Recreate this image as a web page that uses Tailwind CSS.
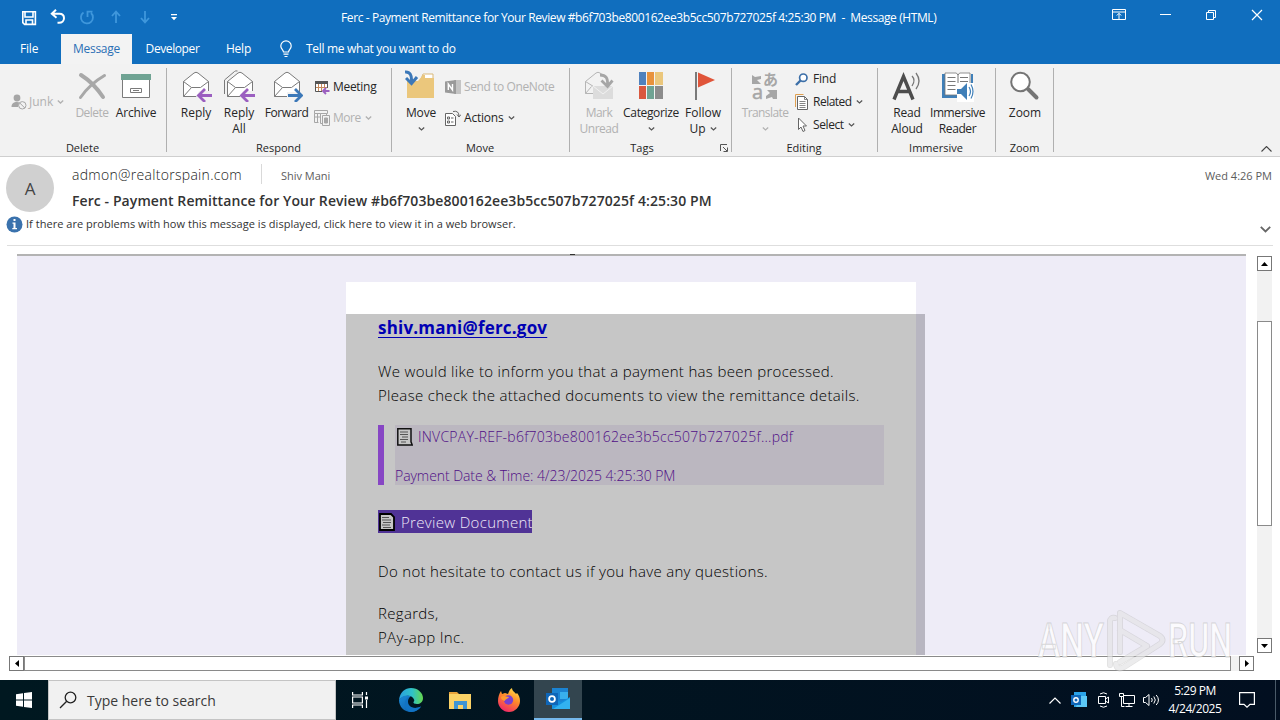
<!DOCTYPE html>
<html lang="en">
    <head>
        <meta charset="UTF-8">
        <meta name="viewport" content="width=device-width, initial-scale=1.0">
        <title>Message (HTML)</title>
        <script src="https://cdn.jsdelivr.net/npm/@tailwindcss/browser@4"></script>
    </head>
    <body class="w-[1280px] h-[720px] overflow-hidden bg-white font-['Open_Sans','Noto_Sans',sans-serif] text-xs text-[#262626] whitespace-nowrap flex flex-col">

        <!-- TITLE BAR -->
        <header class="h-16 bg-[#106ebe] text-white shrink-0">
            <div class="relative flex items-center h-[34px]">
                <!-- Quick access -->
                <div class="flex items-center pl-5 pt-px">
                    <svg class="w-[18px] h-[18px]" viewBox="0 0 18 18" fill="none" stroke="#fff" stroke-width="1.6"><path d="M2.8 2.8h12.6v12.6H4.6L2.8 13.600z"/><path d="M5 3v5h8V3M6 15v-4h6.500v4"/></svg>
                    <svg class="w-[18px] h-[18px] ml-[11px]" viewBox="0 0 18 18" fill="none" stroke="#fff" stroke-width="2"><path d="M7 .8 2.800 4.800l4.700 4M3 4.800h7.500c3 0 4.500 2 4.500 4.500s-2 4.500-5 4.500H8.500"/></svg>
                    <svg class="w-[18px] h-[18px] ml-[11px]" viewBox="0 0 18 18" fill="none" stroke="#3f97dc" stroke-width="1.800"><path d="M5.500 3.500a6 6 0 1 0 7.500.5M9.500 8V2.700h5"/></svg>
                    <svg class="w-[18px] h-[18px] ml-[11px]" viewBox="0 0 18 18" fill="none" stroke="#3f97dc" stroke-width="1.800"><path d="M9 14V3M5 7l4-4.500L13 7"/></svg>
                    <svg class="w-[18px] h-[18px] ml-[11px]" viewBox="0 0 18 18" fill="none" stroke="#3f97dc" stroke-width="1.800"><path d="M9 2v11M5 9l4 4.500L13 9"/></svg>
                    <svg class="w-[18px] h-[18px] ml-[11px]" viewBox="0 0 18 18" fill="#fff"><path d="M6 5h6v1.200H6zM6 8h6l-3 3.200z"/></svg>
                </div>
                <div class="absolute left-[341px] top-[9px] leading-[18px] tracking-[-0.4px] whitespace-pre">Ferc - Payment Remittance for Your Review #b6f703be800162ee3b5cc507b727025f 4:25:30 PM  -  Message (HTML)</div>
                <!-- Window buttons -->
                <div class="ml-auto flex items-center pb-1 pr-4">
                    <svg class="w-[14px] h-[12px]" viewBox="0 0 14 12" fill="none" stroke="#fff"><path d="M.5.5h13v10H.5zM.5 3h13M7 10V4.500M4.800 6.500 7 4.300l2.200 2.200"/></svg>
                    <svg class="w-[11px] h-[12px] ml-[34px]" viewBox="0 0 11 12" stroke="#fff"><path d="M0 5.500h11"/></svg>
                    <svg class="w-[11px] h-[12px] ml-[35px]" viewBox="0 0 11 12" fill="none" stroke="#fff"><path d="M.5 3.500h7v7h-7zM2.500 3V1.500h7v7H8"/></svg>
                    <svg class="w-[12px] h-[12px] ml-[34px] mr-px" viewBox="0 0 12 12" stroke="#fff" stroke-width="1.200"><path d="m1 1 10 10M11 1 1 11"/></svg>
                </div>
            </div>
            <!-- Tabs -->
            <div class="flex h-[30px] leading-[30px]">
                <div class="w-[61px] pl-5 tracking-[-0.2px]">File</div>
                <div class="w-[71px] text-center bg-[#f3f3f3] text-[#2b6fb5] tracking-[-0.3px]">Message</div>
                <div class="w-[81px] text-center tracking-[-0.4px]">Developer</div>
                <div class="w-[51px] text-center tracking-[-0.2px]">Help</div>
                <svg class="w-4 h-[18px] ml-[14px] mt-1.5" viewBox="0 0 16 18" fill="none" stroke="#fff" stroke-width="1.200"><path d="M5.500 12c0-2-2.700-3-2.700-6a5.200 5.200 0 0 1 10.400 0c0 3-2.700 4-2.700 6zM5.500 14.200h5M6.500 16.500h3"/></svg>
                <div class="ml-3 tracking-[-0.3px]">Tell me what you want to do</div>
            </div>
        </header>

        <!-- RIBBON -->
        <section class="flex h-[93px] shrink-0 bg-[#f2f2f2] border-b border-[#cfcfcf] leading-4 text-center relative">

            <!-- Delete -->
            <div class="w-[167px] relative flex flex-col">
                <div class="flex h-[76px] pt-1.5 pl-[11px]">
                    <div class="w-[59px] flex items-center h-[63px] text-[#b1b1b1]">
                        <svg class="w-4 h-4" viewBox="0 0 16 16"><circle cx="6" cy="4" r="3.400" fill="#a6a6a6"/><path d="M.5 13c0-3.500 2-5 5.500-5 1 0 2 .2 2.500.5L7 13z" fill="#a6a6a6"/><circle cx="11.300" cy="11.300" r="3.700" fill="#f2f2f2" stroke="#a6a6a6"/><path d="m8.800 9 5 5" stroke="#a6a6a6"/></svg>
                        <span class="ml-0.5">Junk</span>
                        <svg class="w-[7px] h-1 ml-1" viewBox="0 0 7 4" fill="none" stroke="#b1b1b1" stroke-width="1.300"><path d="m.8.5 2.700 2.500L6.200.5"/></svg>
                    </div>
                    <div class="w-11 flex flex-col items-center text-[#b1b1b1]">
                        <svg class="w-8 h-8 mb-[3px]" viewBox="0 0 32 32" fill="none" stroke="#a8a8a8" stroke-linecap="round"><path d="M5 5c8 5 16 13 22 22" stroke-width="4"/><path d="M28.500 5.500C19 11 11 18 4.500 27.500" stroke-width="3"/></svg>
                        <span class="tracking-[-0.5px]">Delete</span>
                    </div>
                    <div class="w-11 flex flex-col items-center">
                        <svg class="w-8 h-8 mb-[3px]" viewBox="0 0 32 32"><path d="M2.500 9.500h27v18h-27z" fill="#fff" stroke="#7a7a7a"/><path d="M1 4h30v6H1z" fill="#6fa393"/><path d="M10.500 18.500h11v4h-11z" fill="#fff" stroke="#7a7a7a"/><path d="M13 20.500h6" stroke="#7a7a7a"/></svg>
                        <span class="tracking-[-0.1px]">Archive</span>
                    </div>
                </div>
                <div class="text-[11px] pr-0.5">Delete</div>
                <div class="absolute right-0 top-1 w-px h-[84px] bg-[#b0b0b0]"></div>
            </div>

            <!-- Respond -->
            <div class="w-[225px] relative flex flex-col">
                <div class="flex h-[76px] pt-1.5 pl-[7px]">
                    <div class="w-11 flex flex-col items-center">
                        <svg class="w-8 h-8 mb-[3px]" viewBox="0 0 32 32" fill="none"><path d="M3.500 11.500 14 3q2-1.500 4 0l10.500 8.500V26.500h-25z" fill="#fff" stroke="#7a7a7a"/><path d="m3.500 11.500 8 6h9l8-6M3.500 26.500l8-9" stroke="#7a7a7a"/><path d="M19 21h13v12H16v-6z" fill="#f2f2f2"/><path d="M32 25.500H19M25 19l-6.500 6.500L25 32" stroke="#9b5fc0" stroke-width="2.800"/></svg>
                        <span>Reply</span>
                    </div>
                    <div class="w-[42px] flex flex-col items-center">
                        <svg class="w-8 h-8 mb-[3px]" viewBox="0 0 32 32" fill="none"><path d="M1.500 24V10L11.500 1.500q1-1 3-.5" stroke="#7a7a7a"/><path d="M4.500 11.500 15 3q2-1.500 4 0l10.500 8.500V26.500h-25z" fill="#fff" stroke="#7a7a7a"/><path d="m4.500 11.500 8 6h9l8-6M4.500 26.500l8-9" stroke="#7a7a7a"/><path d="M20 21h12v12H17v-6z" fill="#f2f2f2"/><path d="M32 25.500H19M25 19l-6.500 6.500L25 32" stroke="#9b5fc0" stroke-width="2.800"/></svg>
                        <span>Reply<br>All</span>
                    </div>
                    <div class="w-[53px] flex flex-col items-center">
                        <svg class="w-8 h-8 mb-[3px]" viewBox="0 0 32 32" fill="none"><path d="M3.500 11.500 14 3q2-1.500 4 0l10.500 8.500V26.500h-25z" fill="#fff" stroke="#7a7a7a"/><path d="m3.500 11.500 8 6h9l8-6M3.500 26.500l8-9" stroke="#7a7a7a"/><path d="M16 22h16v11H16z" fill="#f2f2f2"/><path d="M17 25.500h13M24 19l6.500 6.500L24 32" stroke="#3c78b8" stroke-width="2.800"/></svg>
                        <span class="tracking-[-0.4px]">Forward</span>
                    </div>
                    <div class="flex flex-col pl-px pt-[9px] gap-[15px]">
                        <div class="flex items-center h-4">
                            <svg class="w-4 h-4" viewBox="0 0 16 16" fill="none"><path d="M1.500 2.500h12v10h-12z" fill="#fff" stroke="#555"/><path d="M1 2h13v3H1z" fill="#555"/><path d="M4.500 5v7M7.500 5v7M10.500 5v7M2 8.500h11" stroke="#c88a5c"/><path d="M8 9h8v7H8z" fill="#f2f2f2"/><path d="M15.500 12H9M12 9l-3 3 3 3" stroke="#9b5fc0" stroke-width="1.800"/></svg>
                            <span class="ml-[3px] tracking-[-0.3px]">Meeting</span>
                        </div>
                        <div class="flex items-center h-4 text-[#b1b1b1]">
                            <svg class="w-4 h-4" viewBox="0 0 16 16" fill="none" stroke="#a6a6a6"><path d="M.5.500h13v3H.5zM.5 3.500v9h4M3.500 4v8M1 7h5"/><path d="M6.500 3.500h6v10h-6z" fill="#f2f2f2"/><path d="M8.500 5.500h7v10h-7z" fill="#f2f2f2"/><path d="M10.500 8v5h3V8z" fill="#a6a6a6"/></svg>
                            <span class="ml-[3px] tracking-[-0.5px]">More</span>
                            <svg class="w-[7px] h-1 ml-1" viewBox="0 0 7 4" fill="none" stroke="#b1b1b1" stroke-width="1.300"><path d="m.8.5 2.700 2.500L6.200.5"/></svg>
                        </div>
                    </div>
                </div>
                <div class="text-[11px] pr-0.5">Respond</div>
                <div class="absolute right-0 top-1 w-px h-[84px] bg-[#b0b0b0]"></div>
            </div>

            <!-- Move -->
            <div class="w-[178px] relative flex flex-col">
                <div class="flex h-[76px] pt-1.5 pl-2">
                    <div class="w-[42px] flex flex-col items-center">
                        <svg class="w-8 h-8 mb-[3px]" viewBox="0 0 32 32" fill="none"><path d="M18 4h10v5H16z" fill="#fff" stroke="#d9b878"/><path d="M2 11h11l5-6h2v3h9v20H2z" fill="#ebc77c"/><path d="M0 2c5-.500 7 3 6.500 10M1 8l5.500 5.500L12 7" stroke="#3c78b8" stroke-width="3"/></svg>
                        <span class="tracking-[-0.2px]">Move</span>
                        <svg class="w-[7px] h-1 mt-[6px]" viewBox="0 0 7 4" fill="none" stroke="#555" stroke-width="1.200"><path d="m.8.5 2.700 2.500L6.200.5"/></svg>
                    </div>
                    <div class="flex flex-col pl-[3px] pt-[9px] gap-[15px]">
                        <div class="flex items-center h-4 text-[#b1b1b1]">
                            <svg class="w-4 h-4" viewBox="0 0 16 16"><path d="M9 1h7v14H9z" fill="#c4c4c4"/><path d="M0 2.500 11 1v14L0 13.500z" fill="#9a9a9a"/><path d="M3.300 11V5l4.200 6V5" fill="none" stroke="#fff" stroke-width="1.400"/></svg>
                            <span class="ml-[3px] tracking-[-0.4px]">Send to OneNote</span>
                        </div>
                        <div class="flex items-center h-4">
                            <svg class="w-4 h-4" viewBox="0 0 16 16" fill="none" stroke="#666"><path d="M.5 3.500h7l3 3v9H.5z" fill="#fff"/><path d="M2.500 9h2v-2h-2zM2.500 13h2v-2h-2zM6 8h2.500M6 12h2.500M8 1.500q6-1.500 6 5M12 4.500l2 2.500 2-2.500"/></svg>
                            <span class="ml-[3px] tracking-[-0.2px]">Actions</span>
                            <svg class="w-[7px] h-1 ml-1" viewBox="0 0 7 4" fill="none" stroke="#555" stroke-width="1.200"><path d="m.8.5 2.700 2.500L6.200.5"/></svg>
                        </div>
                    </div>
                </div>
                <div class="text-[11px] pr-0.5">Move</div>
                <div class="absolute right-0 top-1 w-px h-[84px] bg-[#b0b0b0]"></div>
            </div>

            <!-- Tags -->
            <div class="w-[162px] relative flex flex-col">
                <div class="flex h-[76px] pt-1.5 pl-[7px]">
                    <div class="w-11 flex flex-col items-center text-[#b1b1b1]">
                        <svg class="w-8 h-8 mb-[3px]" viewBox="0 0 32 32" fill="none" stroke="#b5b5b5"><path d="M11 23.500H2.500V11.500L13 3q2-1.500 4 0l7 5M2.500 11.500l8 5M2.500 23.500l6-7"/><path d="M10 16h20v13H10z" fill="#dcdcdc" stroke="none"/><path d="m10 16 10 8 10-8" stroke="#f2f2f2"/><path d="M17 5c6 0 8 3 7.500 10M18.500 10.500l6 6 5-6" stroke="#a6a6a6" stroke-width="2.800"/></svg>
                        <span class="tracking-[-0.5px]">Mark<br>Unread</span>
                    </div>
                    <div class="w-[60px] flex flex-col items-center">
                        <svg class="w-8 h-8 mb-[3px]" viewBox="0 0 32 32"><path d="M4 2h7v13H4z" fill="#4f81bd"/><path d="M12 2h7v13h-7z" fill="#e8923c"/><path d="M20 2h8v13h-8z" fill="#ebc77c"/><path d="M4 16h7v13H4z" fill="#d9583f"/><path d="M12 16h7v13h-7z" fill="#6fa393"/><path d="M20 16h8v13h-8z" fill="#8c8c8c"/></svg>
                        <span class="tracking-[-0.35px]">Categorize</span>
                        <svg class="w-[7px] h-1 mt-[6px]" viewBox="0 0 7 4" fill="none" stroke="#555" stroke-width="1.200"><path d="m.8.5 2.700 2.500L6.200.5"/></svg>
                    </div>
                    <div class="w-11 flex flex-col items-center">
                        <svg class="w-8 h-8 mb-[3px]" viewBox="0 0 32 32"><path d="M8 2h2v28H8z" fill="#7a7a7a"/><path d="M11 2.500 28 10l-17 7.500z" fill="#e0553a"/></svg>
                        <span>Follow</span>
                        <span class="flex items-center">Up<svg class="w-[7px] h-1 ml-1" viewBox="0 0 7 4" fill="none" stroke="#555" stroke-width="1.200"><path d="m.8.5 2.700 2.500L6.200.5"/></svg></span>
                    </div>
                </div>
                <div class="text-[11px] pr-[18px]">Tags</div>
                <svg class="absolute right-1 bottom-1 w-2 h-2" viewBox="0 0 8 8" fill="none" stroke="#555"><path d="M.5 7V.500H7M3 3l4 4M7.500 3.500v4h-4"/></svg>
                <div class="absolute right-0 top-1 w-px h-[84px] bg-[#b0b0b0]"></div>
            </div>

            <!-- Editing -->
            <div class="w-[146px] relative flex flex-col">
                <div class="flex h-[76px] pt-1.5 pl-[7px]">
                    <div class="w-[52px] flex flex-col items-center text-[#b1b1b1]">
                        <svg class="w-8 h-8 mb-[3px] overflow-visible" viewBox="0 0 32 32" fill="#a6a6a6"><path d="M3 5l3 2 6-1v3l-4 1 4 4H3zM28 29v-9H18l3 3-4 3v3l6-2 1 2z"/><text x="14" y="15" font-size="15" font-weight="700" font-family="Noto Sans CJK JP, sans-serif">あ</text><text x="3" y="29" font-size="20" font-family="Open Sans, sans-serif" stroke="#a6a6a6" stroke-width=".5">a</text></svg>
                        <span class="tracking-[-0.6px]">Translate</span>
                        <svg class="w-[7px] h-1 mt-[6px]" viewBox="0 0 7 4" fill="none" stroke="#b1b1b1" stroke-width="1.200"><path d="m.8.5 2.700 2.500L6.200.5"/></svg>
                    </div>
                    <div class="flex flex-col pl-1 pt-px gap-[7px]">
                        <div class="flex items-center h-4">
                            <svg class="w-[13px] h-[13px]" viewBox="0 0 13 13" fill="none" stroke="#3c6fa8"><circle cx="8.300" cy="4.700" r="3.700" fill="#fff" stroke-width="1.700"/><path d="M5.500 7.500 1 12" stroke-width="2.400"/></svg>
                            <span class="ml-[5px] tracking-[-0.2px]">Find</span>
                        </div>
                        <div class="flex items-center h-4">
                            <svg class="w-[14px] h-4" viewBox="0 0 14 16" fill="none" stroke="#666"><path d="M.5 13V.500h8" stroke="#e0a050"/><path d="M2.500 2.500h7l3 3v10h-10z" fill="#fff"/><path d="M9.500 2.500v3h3M4.500 7.500h6M4.500 9.500h6M4.500 11.500h6M4.500 13.500h6" stroke-width=".8"/></svg>
                            <span class="ml-1 tracking-[-0.5px]">Related</span>
                            <svg class="w-[7px] h-1 ml-1" viewBox="0 0 7 4" fill="none" stroke="#555" stroke-width="1.200"><path d="m.8.5 2.700 2.500L6.200.5"/></svg>
                        </div>
                        <div class="flex items-center h-4">
                            <svg class="w-[14px] h-4" viewBox="0 0 14 16" fill="#fff" stroke="#666"><path d="M3.500 1v11.500L6 10l2 4.500 2-1-2-4.500h3.500z"/></svg>
                            <span class="ml-1 tracking-[-0.4px]">Select</span>
                            <svg class="w-[7px] h-1 ml-1" viewBox="0 0 7 4" fill="none" stroke="#555" stroke-width="1.200"><path d="m.8.5 2.700 2.500L6.200.5"/></svg>
                        </div>
                    </div>
                </div>
                <div class="text-[11px] pr-0.5">Editing</div>
                <div class="absolute right-0 top-1 w-px h-[84px] bg-[#b0b0b0]"></div>
            </div>

            <!-- Immersive -->
            <div class="w-[118px] relative flex flex-col">
                <div class="flex h-[76px] pt-1.5 pl-[7px]">
                    <div class="w-11 flex flex-col items-center">
                        <svg class="w-8 h-8 mb-[3px] overflow-visible" viewBox="0 0 32 32" fill="none"><path d="M3 29.500 12.500 6.500 22 29.500M7 21.500h11" stroke="#4d4d4d" stroke-width="3.400"/><path d="M21 6q4 4 0 10M25 3q6 8 0 16" stroke="#777" stroke-width="1.300"/></svg>
                        <span class="tracking-[-0.2px]">Read<br>Aloud</span>
                    </div>
                    <div class="w-[57px] flex flex-col items-center">
                        <svg class="w-8 h-8 mb-[3px]" viewBox="0 0 32 32" fill="none"><path d="M0 4h3v20h26V4h2v24H0z" fill="#3f7fb8"/><path d="M3 3h11q2 1 2 2 0-1 2-2h10v22H3z" fill="#fff" stroke="#777" stroke-width=".8"/><path d="M16 4v21M5.500 7.500h8M5.500 11.500h8M5.500 15.500h8M5.500 19.500h8M18 7.500h8M18 11.500h8" stroke="#777"/><path d="M15 13h17v19H15z" fill="#fff"/><path d="M15 19h4l6-6v17l-6-6h-4z" fill="#3f7fb8"/><path d="M27 17q3 4.500 0 9M29 14.500q4 7 0 14" stroke="#3f7fb8" stroke-width="1.200"/></svg>
                        <span class="tracking-[-0.4px]">Immersive<br>Reader</span>
                    </div>
                </div>
                <div class="text-[11px] pr-0.5">Immersive</div>
                <div class="absolute right-0 top-1 w-px h-[84px] bg-[#b0b0b0]"></div>
            </div>

            <!-- Zoom -->
            <div class="w-[58px] relative flex flex-col">
                <div class="flex flex-col items-center h-[76px] pt-1.5">
                    <svg class="w-8 h-8 mb-[3px] mr-0.5" viewBox="0 0 32 32" fill="none" stroke="#757575"><path d="m20 19 8.500 8.500" stroke-width="4" stroke-linecap="round"/><circle cx="12.500" cy="12" r="9.300" fill="#fff" stroke-width="2"/></svg>
                    <span>Zoom</span>
                </div>
                <div class="text-[11px] pr-px">Zoom</div>
                <div class="absolute right-0 top-1 w-px h-[84px] bg-[#b0b0b0]"></div>
            </div>

            <svg class="w-[11px] h-[6px] ml-auto mr-2 mt-[82px]" viewBox="0 0 11 6" fill="none" stroke="#444" stroke-width="1.100"><path d="m.5 5.500 5-5 5 5"/></svg>
        </section>

        <!-- MESSAGE HEADER -->
        <section class="h-[88px] shrink-0 flex relative">
            <div class="flex flex-col pl-1.5 w-[66px]">
                <div class="w-12 h-12 mt-[7px] rounded-full bg-[#d0d0d0] text-[#444] text-[17px] leading-[49px] text-center">A</div>
            </div>
            <div class="flex-1 pl-1.5">
                <div class="flex items-center h-[34px] text-[#5c5c5c]">
                    <span class="text-sm pt-0.5 font-light text-[#222] tracking-[0.3px]">admon@realtorspain.com</span>
                    <span class="w-px h-5 bg-[#d9d9d9] ml-[19px]"></span>
                    <span class="text-[11px] ml-[19px] pt-1">Shiv Mani</span>
                    <span class="text-[11px] ml-auto mr-2 pt-1">Wed 4:26 PM</span>
                </div>
                <div class="text-sm leading-5 font-semibold text-[#333] tracking-[0.09px]">Ferc - Payment Remittance for Your Review #b6f703be800162ee3b5cc507b727025f 4:25:30 PM</div>
            </div>
            <div class="absolute left-1.5 top-[59px] flex items-center text-[11px] h-4 text-[#333] tracking-[0.03px]">
                <svg class="w-[17px] h-[17px] mr-[3px]" viewBox="0 0 17 17"><circle cx="8.500" cy="8.500" r="8" fill="#3a72ad"/><path d="M7.500 3h2v2h-2zM6.500 6.500h3V12H11v1.200H6.300V12h1.200V7.700h-1z" fill="#fff"/></svg>
                If there are problems with how this message is displayed, click here to view it in a web browser.
            </div>
            <svg class="absolute right-[9px] top-[69px] w-[11px] h-[7px]" viewBox="0 0 11 7" fill="none" stroke="#666" stroke-width="1.800"><path d="m.8.8 4.700 4.700L10.200.8"/></svg>
        </section>
        <div class="h-px ml-[7px] mr-[7px] bg-[#dedede] shrink-0"></div>

        <!-- MESSAGE BODY -->
        <main class="h-[434px] shrink-0 relative pt-2">
            <div class="flex h-[401px]">
                <div class="ml-[17px] w-[1229px] bg-[#eeecf7] border-t-2 border-[#b3b3b3] pl-[329px] pt-[26px] overflow-hidden">
                    <div class="w-[570px] h-8 bg-white"></div>
                    <div class="w-[579px] h-[341px] bg-[#c6c6c6] border-r-9 border-[#b8b6c1] pl-8 text-[15px] leading-6 font-light text-black tracking-[0.32px]">
                        <div class="pt-0.5 text-[17px] font-bold text-[#0000b4] underline underline-offset-3 decoration-1 decoration-[#0000b4] tracking-[0.2px]">shiv.mani@ferc.gov</div>
                        <div class="mt-[19px]">We would like to inform you that a payment has been processed.<br>Please check the attached documents to view the remittance details.</div>
                        <div class="mt-[18px] flex w-[506px] h-[60px] border-l-6 border-[#8746c4] pl-[11px]">
                            <div class="flex-1 bg-[#bbb7c0] text-[#500f86] text-sm">
                                <div class="flex items-center h-6 tracking-[0.24px]">
                                    <svg class="w-4 h-[18px] ml-0.5 mr-[5px]" viewBox="0 0 16 18" fill="none" stroke="#111"><path d="M.8.8h13.200v13l1.200 3.200H.8z" fill="#c6c6c6" stroke-width="1.500"/><path d="M3 4h8M3 6.500h8M5 9h6M3 11.500h8M4 14h5" stroke="#555"/></svg>
                                    INVCPAY-REF-b6f703be800162ee3b5cc507b727025f...pdf
                                </div>
                                <div class="mt-[17px] leading-5 tracking-[-0.06px]">Payment Date &amp; Time: 4/23/2025 4:25:30 PM</div>
                            </div>
                        </div>
                        <div class="mt-[25px] w-[154px] h-[23px] overflow-hidden bg-[#503396] text-[#efe9f8] flex items-center">
                            <svg class="w-4 h-[18px] ml-px mr-[6px] shrink-0" viewBox="0 0 16 18" fill="none" stroke="#000"><path d="M1 1h11l3 3v13H1z" fill="#c6c6c6" stroke-width="1.800"/><path d="M3 4.500h7M3 7h9M4 9.500h8M3 12h8M4 14.500h8" stroke="#555"/></svg>
                            Preview Document
                        </div>
                        <div class="mt-[26px]">Do not hesitate to contact us if you have any questions.</div>
                        <div class="mt-[18px]">Regards,<br>PAy-app Inc.</div>
                    </div>
                </div>
                <!-- Vertical scrollbar -->
                <div class="ml-[11px] mt-0.5 w-[15px] h-[397px] bg-[#f2f2f2] flex flex-col">
                    <div class="h-[15px] border border-[#777] bg-white flex items-center justify-center"><svg class="w-[7px] h-1" viewBox="0 0 7 4"><path d="M0 4h7L3.500 0z"/></svg></div>
                    <div class="h-[205px] mt-[50px] border border-[#8a8a8a] bg-white"></div>
                    <div class="h-[15px] mt-auto border border-[#777] bg-white flex items-center justify-center"><svg class="w-[7px] h-1" viewBox="0 0 7 4"><path d="M0 0h7L3.500 4z"/></svg></div>
                </div>
            </div>
            <!-- Horizontal scrollbar -->
            <div class="ml-[9px] mt-px w-[1245px] h-[15px] bg-[#f2f2f2] flex">
                <div class="w-[15px] border border-[#777] bg-white flex items-center justify-center"><svg class="w-1 h-[7px]" viewBox="0 0 4 7"><path d="M4 0v7L0 3.500z"/></svg></div>
                <div class="w-[1207px] border border-[#8a8a8a] bg-white"></div>
                <div class="w-[15px] ml-auto border border-[#777] bg-white flex items-center justify-center"><svg class="w-1 h-[7px]" viewBox="0 0 4 7"><path d="M0 0v7l4-3.500z"/></svg></div>
            </div>
            <div class="absolute left-[570px] top-2 w-[5px] h-px bg-[#333]"></div>

            <!-- Watermark -->
            <svg class="absolute left-[1036px] top-[360px] w-[200px] h-[70px] overflow-visible" viewBox="0 0 200 70" fill="#fff" stroke="#b4b4b4" stroke-opacity=".5">
                <g font-family="Roboto, Open Sans, sans-serif" font-size="49" font-weight="500" fill-opacity=".8">
                    <text x="2" y="51" textLength="66" lengthAdjust="spacingAndGlyphs">ANY</text>
                    <text x="132" y="51" textLength="64" lengthAdjust="spacingAndGlyphs">RUN</text>
                </g>
                <g fill="none" stroke-linejoin="round" stroke-linecap="round">
                    <path d="M74 59V16q0-5 5-4M84 46V7l40 23q5 4 0 8L88 61q-7 4-8-3M84 24l27 16-27 16" stroke="#b4b4b4" stroke-opacity=".4" stroke-width="6"/>
                    <path d="M74 59V16q0-5 5-4M84 46V7l40 23q5 4 0 8L88 61q-7 4-8-3M84 24l27 16-27 16" stroke="#f8f8fa" stroke-width="4.500"/>
                </g>
            </svg>
        </main>

        <!-- TASKBAR -->
        <footer class="h-10 shrink-0 bg-[#011520] bg-linear-to-r from-[#001820] to-[#020f20] text-white flex">
            <div class="w-12 flex items-center justify-center"><svg class="w-4 h-4" viewBox="0 0 16 16" fill="#fff"><path d="M0 2.200 7 1.200V7.500H0zM8 1.100 16 0v7.500H8zM0 8.500h7v6.300l-7-1zM8 8.500h8V16l-8-1.100z"/></svg></div>
            <div class="w-72 bg-[#f1f1f1] border border-[#c4c4c4] text-[#3a3a3a] flex items-center text-sm">
                <svg class="w-[18px] h-[18px] ml-2.5 mr-[10px]" viewBox="0 0 18 18" fill="none" stroke="#222" stroke-width="1.300"><circle cx="11.500" cy="6.500" r="5.300"/><path d="M7.700 10.300 1 17"/></svg>
                <span class="pt-0.5">Type here to search</span>
            </div>
            <div class="w-12 flex items-center justify-center"><svg class="w-4 h-4" viewBox="0 0 16 16" fill="none" stroke="#fff" stroke-width="1.200"><path d="M.6 0v3h9.800V0M.6 16v-3h9.800v3M.6 5h9.800v6H.6zM14.500 0v3M14.500 8v8"/><path d="M13 4.500h3v3h-3z" fill="#fff" stroke="none"/></svg></div>
            <div class="w-[54px] flex items-center justify-center">
                <svg class="w-6 h-6" viewBox="0 0 24 24"><defs><linearGradient id="edgeTop" x1="0" x2="1"><stop stop-color="#2a9fe0"/><stop offset=".55" stop-color="#2fc2c8"/><stop offset="1" stop-color="#66d84d"/></linearGradient><linearGradient id="edgeBot" x1="0" y1="0" x2="1" y2="1"><stop stop-color="#1b8ad8"/><stop offset="1" stop-color="#0c59a4"/></linearGradient></defs><path d="M0 12C1 4 6 0 12 0c7 0 12 5 12 10 0 4-3 6-6 6-2.500 0-4-1-3.500-2 1-1 .8-1.800.5-2.500C13.500 7 6 6 0 12z" fill="url(#edgeTop)"/><path d="M0 12c3-5 9-5.500 12-3.500-3 1-4 3-4 5 0 4 3.500 6.500 8 6.500 3 0 4.500-1 6-1.500C20 22 16 24 12 24 5 24 0 18.500 0 12z" fill="url(#edgeBot)"/><path d="M9 9.500c-4 2-5 10 1 14.300 5 .7 9.500-1.300 12-5.300-6 3-13 1-13-5 0-1.500.5-3 1.700-4z" fill="#1173c4"/></svg>
            </div>
            <div class="w-11 flex items-center justify-center"><svg class="w-[22px] h-[19px]" viewBox="0 0 22 19"><path d="M0 1h8l2 2H0z" fill="#e8a33a"/><path d="M0 3h22v15H0z" fill="#fbd266"/><path d="M5 10h13v8H5z" fill="#3f94d2"/><path d="M9 14h5v4H9z" fill="#fbd266"/></svg></div>
            <div class="w-[52px] flex items-center justify-center pl-px">
                <svg class="w-6 h-6" viewBox="0 0 24 24"><defs><linearGradient id="fox" x1=".8" y1="0" x2=".3" y2="1"><stop stop-color="#ffe14a"/><stop offset=".45" stop-color="#ff8a2a"/><stop offset="1" stop-color="#f0256a"/></linearGradient></defs><path d="M1 13C1 9 2 6 4 3l1 3 3-1 3 1c1-3 2-5 4-6 0 3 3 4 4 6l1-1c2 2 3 5 3 8 0 6-5 11-11 11S1 19 1 13z" fill="url(#fox)"/><circle cx="11.500" cy="12" r="4.700" fill="#7a3fd0"/><path d="M4 9c3-2 5 0 8 0-1 2-4 2-4 4-2-1-4-1-4-4z" fill="#ff9a2e"/></svg>
            </div>
            <div class="w-12 bg-[#33454f] border-b-2 border-[#76b9ed] flex items-center justify-center"><svg class="w-6 h-[22px]" viewBox="0 0 24 22"><path d="M6 0h16v14H6z" fill="#1b83d2"/><path d="M14 4h8v7h-8z" fill="#38b0ee"/><path d="M6 10l9 4 9-5v12H6z" fill="#1490df"/><path d="m24 10-17 11h17z" fill="#32b2f0"/><path d="M0 5h12v12H0z" fill="#0f66b8"/><circle cx="6" cy="11" r="2.900" fill="none" stroke="#fff" stroke-width="1.800"/></svg></div>

            <!-- Tray -->
            <div class="ml-auto flex items-center">
                <svg class="w-3 h-[7px]" viewBox="0 0 12 7" fill="none" stroke="#fff" stroke-width="1.200"><path d="m.5 6.500 5.500-5.500 5.500 5.500"/></svg>
                <svg class="w-4 h-4 ml-[10px]" viewBox="0 0 16 16"><path d="M3 0h12v15H3z" fill="#2aa3e8"/><path d="M9 4h7v11H5z" fill="#5cc8f5"/><path d="M0 3h10v10H0z" fill="#0f66b8"/><circle cx="5" cy="8" r="2.200" fill="none" stroke="#fff" stroke-width="1.400"/></svg>
                <svg class="w-3 h-4 ml-[11px]" viewBox="0 0 12 16" fill="none" stroke="#fff"><path d="M.5 4.500h7v7h-7zM7.500 7l3-2v6l-3-2M2 2q3.500-2.500 7 0M2 14q3.500 2.500 7 0"/></svg>
                <svg class="w-4 h-4 ml-[9px]" viewBox="0 0 16 16" fill="none" stroke="#fff"><path d="M4.500 3.500h11v8h-11zM10 11.500v3M6.500 14.500h7M2.500 5v9.500h3"/><path d="M.5 1.500h4v3h-4z" fill="#011520"/></svg>
                <svg class="w-[17px] h-4 ml-2" viewBox="0 0 17 16" fill="none" stroke="#fff"><path d="M.5 5.500h2L6 2.500v11l-3.500-3h-2zM8.500 6q1.500 2 0 4M10.800 4.500q3 3.500 0 7M13.200 3q4.500 5 0 10"/></svg>
                <div class="w-[70px] text-center text-[12px] leading-[18px] tracking-[-0.45px]">5:29 PM<br>4/24/2025</div>
                <svg class="w-4 h-4 ml-[9px]" viewBox="0 0 16 16" fill="none" stroke="#fff" stroke-width="1.200"><path d="M.6.600h14.800v11.800H11l-3 2.800-3-2.800H.6z"/></svg>
                <div class="w-px h-10 bg-[#4a5a68] ml-5 mr-1"></div>
            </div>
        </footer>
    </body>
</html>
